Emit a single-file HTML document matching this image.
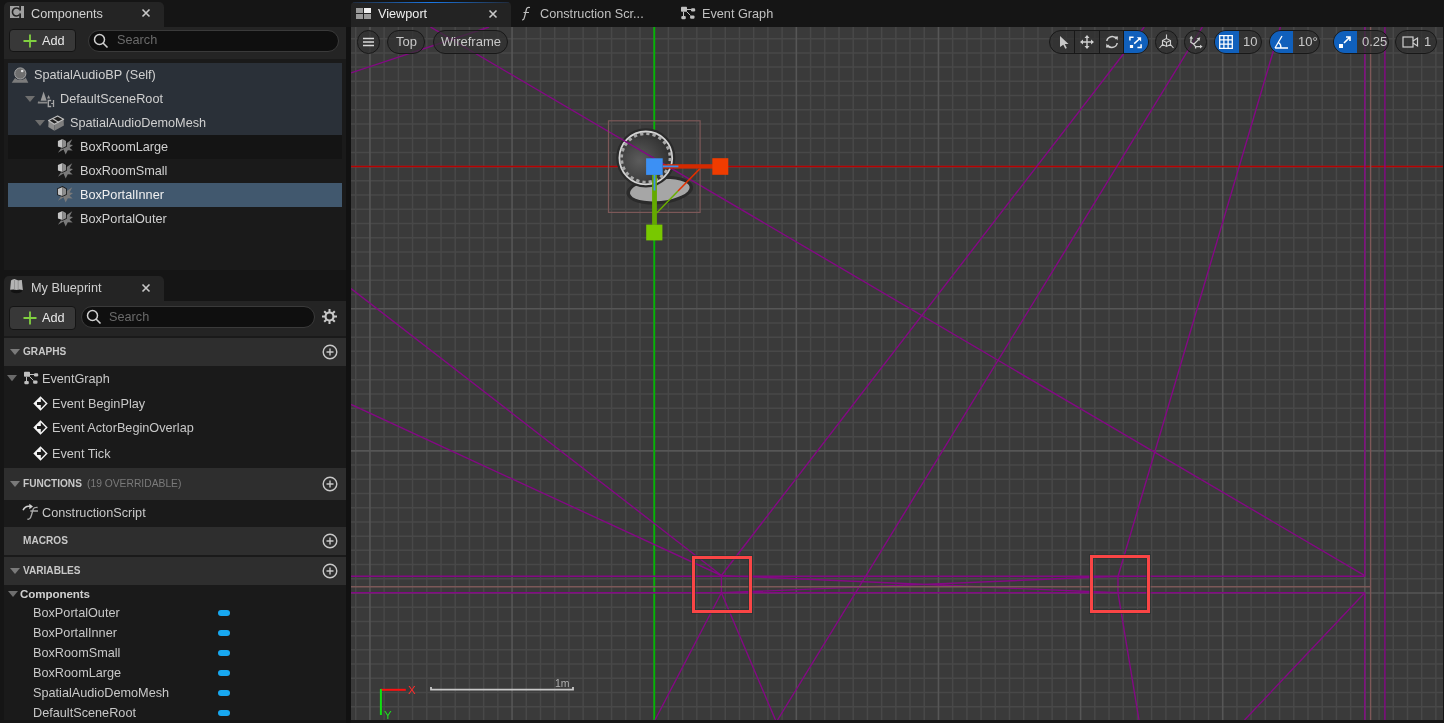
<!DOCTYPE html><html><head><meta charset="utf-8"><style>
*{margin:0;padding:0;box-sizing:border-box}
html,body{width:1444px;height:723px;overflow:hidden;background:#151515;font-family:"Liberation Sans",sans-serif;color:#c0c0c0}
.a{position:absolute}
.t{position:absolute;white-space:nowrap;font-size:12.7px;line-height:16px;will-change:transform}
svg{position:absolute;overflow:visible}
</style></head><body>
<div class="a" style="left:4px;top:2px;width:160px;height:25px;background:#242424;border-radius:5px 5px 0 0"></div>
<div class="a" style="left:4px;top:27px;width:342px;height:32px;background:#242424;"></div>
<div class="a" style="left:4px;top:59px;width:342px;height:211px;background:#1a1a1a;"></div>
<svg style="left:0;top:0" width="30" height="26" viewBox="0 0 30 26"><rect x="10" y="6" width="9.2" height="12" fill="#a0a0a0"/><rect x="21" y="6" width="3" height="12" fill="#a0a0a0"/><path d="M19.3 9.2A4 4 0 1 0 19.3 14.8" stroke="#222" stroke-width="1.6" fill="none"/><rect x="19.1" y="10.6" width="2" height="2.8" fill="#a0a0a0"/></svg>
<div class="t" style="left:31px;top:5.5px;color:#d0d0d0;font-size:12.7px;font-weight:normal;">Components</div>
<svg style="left:141px;top:8px" width="10" height="10" viewBox="0 0 10 10"><path d="M1.5 1.5L8.5 8.5M8.5 1.5L1.5 8.5" stroke="#c8c8c8" stroke-width="1.6"/></svg>
<div class="a" style="left:9px;top:29px;width:67px;height:23px;background:#383838;border-radius:4px;border:1px solid #141414"></div>
<svg style="left:23px;top:33.5px" width="14" height="14" viewBox="0 0 14 14"><path d="M7 0.5V13.5M0.5 7H13.5" stroke="#80d040" stroke-width="1.8"/></svg>
<div class="t" style="left:42px;top:32.5px;color:#e8e8e8;font-size:12.7px;font-weight:normal;">Add</div>
<div class="a" style="left:88px;top:29.8px;width:251px;height:22px;background:#0f0f0f;border-radius:11px;border:1px solid #3a3a3a"></div>
<svg style="left:93px;top:33px" width="16" height="16" viewBox="0 0 16 16"><circle cx="6.5" cy="6.5" r="5" stroke="#d0d0d0" stroke-width="1.5" fill="none"/><path d="M10 10L14.5 14.5" stroke="#d0d0d0" stroke-width="1.6"/></svg>
<div class="t" style="left:116.5px;top:31.6px;color:#6a6a6a;font-size:12.7px;font-weight:normal;">Search</div>
<div class="a" style="left:8px;top:63px;width:334px;height:24px;background:#2a3038;"></div>
<div class="t" style="left:34px;top:67px;color:#d0d0d0;font-size:12.7px;font-weight:normal;">SpatialAudioBP (Self)</div>
<div class="a" style="left:8px;top:87px;width:334px;height:24px;background:#2a3038;"></div>
<div class="t" style="left:60px;top:91px;color:#d0d0d0;font-size:12.7px;font-weight:normal;">DefaultSceneRoot</div>
<div class="a" style="left:8px;top:111px;width:334px;height:24px;background:#2a3038;"></div>
<div class="t" style="left:70px;top:115px;color:#d0d0d0;font-size:12.7px;font-weight:normal;">SpatialAudioDemoMesh</div>
<div class="a" style="left:8px;top:135px;width:334px;height:24px;background:#141414;"></div>
<div class="t" style="left:80px;top:139px;color:#d0d0d0;font-size:12.7px;font-weight:normal;">BoxRoomLarge</div>
<div class="t" style="left:80px;top:163px;color:#d0d0d0;font-size:12.7px;font-weight:normal;">BoxRoomSmall</div>
<div class="a" style="left:8px;top:183px;width:334px;height:24px;background:#41586e;"></div>
<div class="t" style="left:80px;top:187px;color:#f0f0f0;font-size:12.7px;font-weight:normal;">BoxPortalInner</div>
<div class="t" style="left:80px;top:211px;color:#d0d0d0;font-size:12.7px;font-weight:normal;">BoxPortalOuter</div>
<svg style="left:11px;top:64px" width="18" height="20" viewBox="0 0 18 20"><path d="M4.4 13.6L0.7 18.8H17.3L14.7 13.6Z" fill="#7c7c7c"/><circle cx="9.3" cy="9.5" r="6.6" fill="#2a3038"/><circle cx="9.3" cy="9.5" r="5.6" fill="#6e6e6e" stroke="#a8a8a8" stroke-width="1"/><circle cx="11.2" cy="7" r="1.3" fill="#e0e0e0"/></svg>
<svg style="left:25px;top:96px" width="10" height="6" viewBox="0 0 10 6"><path d="M0 0H10L5.0 6Z" fill="#6e6e6e"/></svg>
<svg style="left:34px;top:88px" width="24" height="46" viewBox="0 0 24 46"><path d="M9.55 3.5L12.7 12.7H6.6Z" fill="#9a9a9a"/><path d="M14.6 7L16.2 10.4H13Z" fill="#9a9a9a"/><path d="M3.8 15.6V14.2L5.2 12.8V13.7H13.4V15.6Z" fill="#8a8a8a"/><path d="M17.2 12.5H14.3V18.5H17.2M19.5 12V19" stroke="#a8a8a8" stroke-width="1.3" fill="none"/><path d="M17.2 15.5H19" stroke="#a8a8a8" stroke-width="1.2"/></svg>
<svg style="left:35px;top:120px" width="10" height="6" viewBox="0 0 10 6"><path d="M0 0H10L5.0 6Z" fill="#6e6e6e"/></svg>
<svg style="left:34px;top:88px" width="34" height="46" viewBox="0 0 34 46"><path d="M14.6 32.5L20.4 36.3V42.7L14.3 38.9Z" fill="#8c8c8c"/><path d="M20.4 36.3L29.6 31.2L29.9 37.6L20.4 42.7Z" fill="#7e7e7e"/><path d="M14.6 32.5L23.6 28L29.6 31.2L20.4 36.3Z" fill="#222" stroke="#c0c0c0" stroke-width="1.2" stroke-linejoin="round"/><path d="M18.5 30.6L24.8 34.4" stroke="#c0c0c0" stroke-width="1.2"/></svg>
<svg style="left:56px;top:137px" width="19" height="19" viewBox="0 0 19 19"><path d="M1.9 15.7L7.5 12.5L9.7 17.6L11.8 13.2L16.7 13.6L13.6 10.8L17 8.1L13.6 7.6L16.2 2.3L10 6.5L6 10Z" fill="#7a7a7a"/><path d="M6.5 1.9L10 4V9.3L6.5 11L1.9 9.5V4Z" fill="#1a1a1a" stroke="#151515" stroke-width="1.6"/><path d="M6.5 1.9L1.9 4V9.5L6.5 11Z" fill="#c4c4c4"/><path d="M6.5 1.9L10 4V9.3L6.5 11Z" fill="#8e8e8e"/></svg>
<svg style="left:56px;top:161px" width="19" height="19" viewBox="0 0 19 19"><path d="M1.9 15.7L7.5 12.5L9.7 17.6L11.8 13.2L16.7 13.6L13.6 10.8L17 8.1L13.6 7.6L16.2 2.3L10 6.5L6 10Z" fill="#7a7a7a"/><path d="M6.5 1.9L10 4V9.3L6.5 11L1.9 9.5V4Z" fill="#1a1a1a" stroke="#151515" stroke-width="1.6"/><path d="M6.5 1.9L1.9 4V9.5L6.5 11Z" fill="#c4c4c4"/><path d="M6.5 1.9L10 4V9.3L6.5 11Z" fill="#8e8e8e"/></svg>
<svg style="left:56px;top:185px" width="19" height="19" viewBox="0 0 19 19"><path d="M1.9 15.7L7.5 12.5L9.7 17.6L11.8 13.2L16.7 13.6L13.6 10.8L17 8.1L13.6 7.6L16.2 2.3L10 6.5L6 10Z" fill="#7a7a7a"/><path d="M6.5 1.9L10 4V9.3L6.5 11L1.9 9.5V4Z" fill="#1a1a1a" stroke="#151515" stroke-width="1.6"/><path d="M6.5 1.9L1.9 4V9.5L6.5 11Z" fill="#c4c4c4"/><path d="M6.5 1.9L10 4V9.3L6.5 11Z" fill="#8e8e8e"/></svg>
<svg style="left:56px;top:209px" width="19" height="19" viewBox="0 0 19 19"><path d="M1.9 15.7L7.5 12.5L9.7 17.6L11.8 13.2L16.7 13.6L13.6 10.8L17 8.1L13.6 7.6L16.2 2.3L10 6.5L6 10Z" fill="#7a7a7a"/><path d="M6.5 1.9L10 4V9.3L6.5 11L1.9 9.5V4Z" fill="#1a1a1a" stroke="#151515" stroke-width="1.6"/><path d="M6.5 1.9L1.9 4V9.5L6.5 11Z" fill="#c4c4c4"/><path d="M6.5 1.9L10 4V9.3L6.5 11Z" fill="#8e8e8e"/></svg>
<div class="a" style="left:4px;top:276px;width:160px;height:25px;background:#242424;border-radius:5px 5px 0 0"></div>
<div class="a" style="left:4px;top:301px;width:342px;height:35px;background:#242424;"></div>
<div class="a" style="left:4px;top:336px;width:342px;height:384px;background:#1a1a1a;"></div>
<svg style="left:8px;top:276px" width="18" height="20" viewBox="0 0 18 20"><ellipse cx="8.5" cy="15" rx="5.5" ry="2.2" fill="#121212"/><path d="M3 4.6Q4.5 2.9 6.5 2.9Q8.5 3.5 10.2 4.6Q12 3.8 13.8 4L14.9 14Q11 13.2 8.5 14Q6 13 2.1 13.8Z" fill="#b4b4b4"/><path d="M6.5 4V13M10.2 5V13.5" stroke="#8a8a8a" stroke-width="0.8"/></svg>
<div class="t" style="left:31px;top:279.5px;color:#d0d0d0;font-size:12.7px;font-weight:normal;">My Blueprint</div>
<svg style="left:141px;top:282.5px" width="10" height="10" viewBox="0 0 10 10"><path d="M1.5 1.5L8.5 8.5M8.5 1.5L1.5 8.5" stroke="#c8c8c8" stroke-width="1.6"/></svg>
<div class="a" style="left:9px;top:306px;width:67px;height:24px;background:#383838;border-radius:4px;border:1px solid #141414"></div>
<svg style="left:23px;top:310.5px" width="14" height="14" viewBox="0 0 14 14"><path d="M7 0.5V13.5M0.5 7H13.5" stroke="#80d040" stroke-width="1.8"/></svg>
<div class="t" style="left:42px;top:309.5px;color:#e8e8e8;font-size:12.7px;font-weight:normal;">Add</div>
<div class="a" style="left:81px;top:306px;width:234px;height:22px;background:#0f0f0f;border-radius:11px;border:1px solid #3a3a3a"></div>
<svg style="left:86px;top:309px" width="16" height="16" viewBox="0 0 16 16"><circle cx="6.5" cy="6.5" r="5" stroke="#d0d0d0" stroke-width="1.5" fill="none"/><path d="M10 10L14.5 14.5" stroke="#d0d0d0" stroke-width="1.6"/></svg>
<div class="t" style="left:108.5px;top:308.5px;color:#6a6a6a;font-size:12.7px;font-weight:normal;">Search</div>
<svg style="left:321px;top:308px" width="17" height="17" viewBox="0 0 17 17"><circle cx="8.5" cy="8.5" r="4" fill="none" stroke="#c8c8c8" stroke-width="2.2"/><path d="M8.5 1V4M8.5 13V16M1 8.5H4M13 8.5H16M3.2 3.2L5.3 5.3M11.7 11.7L13.8 13.8M3.2 13.8L5.3 11.7M11.7 5.3L13.8 3.2" stroke="#c8c8c8" stroke-width="2"/></svg>
<div class="a" style="left:4px;top:338px;width:342px;height:28px;background:#2e2e2e;"></div>
<svg style="left:10px;top:349.0px" width="10" height="6" viewBox="0 0 10 6"><path d="M0 0H10L5.0 6Z" fill="#7a7a7a"/></svg>
<div class="t" style="left:23px;top:344.0px;color:#c8c8c8;font-size:10.1px;font-weight:bold;">GRAPHS</div>
<svg style="left:322px;top:344.0px" width="16" height="16" viewBox="0 0 16 16"><circle cx="8" cy="8" r="6.8" stroke="#c8c8c8" stroke-width="1.4" fill="none"/><path d="M8 4.5V11.5M4.5 8H11.5" stroke="#c8c8c8" stroke-width="1.4"/></svg>
<div class="a" style="left:4px;top:468px;width:342px;height:32px;background:#2e2e2e;"></div>
<svg style="left:10px;top:481.0px" width="10" height="6" viewBox="0 0 10 6"><path d="M0 0H10L5.0 6Z" fill="#7a7a7a"/></svg>
<div class="t" style="left:23px;top:476.0px;color:#c8c8c8;font-size:10.1px;font-weight:bold;">FUNCTIONS</div>
<svg style="left:322px;top:476.0px" width="16" height="16" viewBox="0 0 16 16"><circle cx="8" cy="8" r="6.8" stroke="#c8c8c8" stroke-width="1.4" fill="none"/><path d="M8 4.5V11.5M4.5 8H11.5" stroke="#c8c8c8" stroke-width="1.4"/></svg>
<div class="a" style="left:4px;top:527px;width:342px;height:28px;background:#2e2e2e;"></div>
<div class="t" style="left:23px;top:533.0px;color:#c8c8c8;font-size:10.1px;font-weight:bold;">MACROS</div>
<svg style="left:322px;top:533.0px" width="16" height="16" viewBox="0 0 16 16"><circle cx="8" cy="8" r="6.8" stroke="#c8c8c8" stroke-width="1.4" fill="none"/><path d="M8 4.5V11.5M4.5 8H11.5" stroke="#c8c8c8" stroke-width="1.4"/></svg>
<div class="a" style="left:4px;top:557px;width:342px;height:28px;background:#2e2e2e;"></div>
<svg style="left:10px;top:568.0px" width="10" height="6" viewBox="0 0 10 6"><path d="M0 0H10L5.0 6Z" fill="#7a7a7a"/></svg>
<div class="t" style="left:23px;top:563.0px;color:#c8c8c8;font-size:10.1px;font-weight:bold;">VARIABLES</div>
<svg style="left:322px;top:563.0px" width="16" height="16" viewBox="0 0 16 16"><circle cx="8" cy="8" r="6.8" stroke="#c8c8c8" stroke-width="1.4" fill="none"/><path d="M8 4.5V11.5M4.5 8H11.5" stroke="#c8c8c8" stroke-width="1.4"/></svg>
<div class="t" style="left:87px;top:475.5px;color:#7a7a7a;font-size:10.3px;font-weight:normal;">(19 OVERRIDABLE)</div>
<svg style="left:7px;top:374.8px" width="10" height="6.2" viewBox="0 0 10 6.2"><path d="M0 0H10L5.0 6.2Z" fill="#6a6a6a"/></svg>
<svg style="left:22px;top:369px" width="18" height="18" viewBox="0 0 18 18"><path d="M8 5.5H12M4.5 7.8V12M7.5 7.5L11.5 11.5" stroke="#c0c0c0" stroke-width="1" fill="none"/><rect x="2" y="2.8" width="6" height="5" rx="0.8" fill="#c0c0c0"/><rect x="12" y="4.2" width="4.2" height="3.2" rx="1.2" fill="#c0c0c0"/><rect x="2.3" y="11.9" width="4.5" height="3.4" rx="1.2" fill="#c0c0c0"/><rect x="11.1" y="11.4" width="4.4" height="3.4" rx="1.2" fill="#c0c0c0"/></svg>
<div class="t" style="left:42px;top:370.7px;color:#c8c8c8;font-size:12.7px;font-weight:normal;">EventGraph</div>
<svg style="left:33.4px;top:395.5px" width="15" height="15" viewBox="0 0 15 15"><path d="M7.5 0.3L14.7 7.5L7.5 14.7L0.3 7.5Z" fill="#f4f4f4"/><path d="M4 5.9H7.8V2.6L12.7 7.5L7.8 12.4V9.1H4Z" fill="#1a1a1a"/></svg>
<div class="t" style="left:52px;top:395.8px;color:#c8c8c8;font-size:12.7px;font-weight:normal;">Event BeginPlay</div>
<svg style="left:33.4px;top:420.09999999999997px" width="15" height="15" viewBox="0 0 15 15"><path d="M7.5 0.3L14.7 7.5L7.5 14.7L0.3 7.5Z" fill="#f4f4f4"/><path d="M4 5.9H7.8V2.6L12.7 7.5L7.8 12.4V9.1H4Z" fill="#1a1a1a"/></svg>
<div class="t" style="left:52px;top:420.4px;color:#c8c8c8;font-size:12.7px;font-weight:normal;">Event ActorBeginOverlap</div>
<svg style="left:33.4px;top:445.9px" width="15" height="15" viewBox="0 0 15 15"><path d="M7.5 0.3L14.7 7.5L7.5 14.7L0.3 7.5Z" fill="#f4f4f4"/><path d="M4 5.9H7.8V2.6L12.7 7.5L7.8 12.4V9.1H4Z" fill="#1a1a1a"/></svg>
<div class="t" style="left:52px;top:446.2px;color:#c8c8c8;font-size:12.7px;font-weight:normal;">Event Tick</div>
<svg style="left:18px;top:500px" width="26" height="24" viewBox="0 0 26 24"><path d="M5.1 10.3Q7 5.5 12 6.3" stroke="#d0d0d0" stroke-width="1.6" fill="none"/><path d="M11.3 3.8L15 6.5L11.3 9.2Z" fill="#d0d0d0"/><path d="M9.3 19Q12 20.2 13.5 15L15.2 9Q16 7.2 19.6 7.5M12.3 11H20" stroke="#a8a8a8" stroke-width="1.3" fill="none"/></svg>
<div class="t" style="left:42px;top:505.20000000000005px;color:#c8c8c8;font-size:12.7px;font-weight:normal;">ConstructionScript</div>
<svg style="left:8px;top:591px" width="10" height="6" viewBox="0 0 10 6"><path d="M0 0H10L5.0 6Z" fill="#6e6e6e"/></svg>
<div class="t" style="left:20px;top:585.6px;color:#d0d0d0;font-size:11.6px;font-weight:bold;letter-spacing:-0.1px">Components</div>
<div class="t" style="left:33px;top:604.7px;color:#c8c8c8;font-size:12.7px;font-weight:normal;">BoxPortalOuter</div>
<div class="a" style="left:218px;top:610px;width:12px;height:6px;background:#18a8f0;border-radius:3px"></div>
<div class="t" style="left:33px;top:624.7px;color:#c8c8c8;font-size:12.7px;font-weight:normal;">BoxPortalInner</div>
<div class="a" style="left:218px;top:630px;width:12px;height:6px;background:#18a8f0;border-radius:3px"></div>
<div class="t" style="left:33px;top:644.7px;color:#c8c8c8;font-size:12.7px;font-weight:normal;">BoxRoomSmall</div>
<div class="a" style="left:218px;top:650px;width:12px;height:6px;background:#18a8f0;border-radius:3px"></div>
<div class="t" style="left:33px;top:664.7px;color:#c8c8c8;font-size:12.7px;font-weight:normal;">BoxRoomLarge</div>
<div class="a" style="left:218px;top:670px;width:12px;height:6px;background:#18a8f0;border-radius:3px"></div>
<div class="t" style="left:33px;top:684.7px;color:#c8c8c8;font-size:12.7px;font-weight:normal;">SpatialAudioDemoMesh</div>
<div class="a" style="left:218px;top:690px;width:12px;height:6px;background:#18a8f0;border-radius:3px"></div>
<div class="t" style="left:33px;top:704.7px;color:#c8c8c8;font-size:12.7px;font-weight:normal;">DefaultSceneRoot</div>
<div class="a" style="left:218px;top:710px;width:12px;height:6px;background:#18a8f0;border-radius:3px"></div>
<div class="a" style="left:346px;top:27px;width:5px;height:696px;background:#111111;"></div>
<div class="a" style="left:351px;top:2px;width:160px;height:25px;background:#232323;border-radius:4px 4px 0 0"></div>
<div class="a" style="left:353px;top:1.8px;width:156px;height:1.4px;background:linear-gradient(90deg,rgba(20,90,200,0.15),#1a78e6 50%,rgba(20,90,200,0.15));"></div>
<svg style="left:356px;top:8px" width="16" height="12" viewBox="0 0 16 12"><rect x="0" y="0" width="7" height="5" fill="#9a9a9a"/><rect x="8" y="0" width="7" height="5" fill="#f0f0f0"/><rect x="0" y="6" width="7" height="5" fill="#9a9a9a"/><rect x="8" y="6" width="7" height="5" fill="#9a9a9a"/></svg>
<div class="t" style="left:378px;top:5.699999999999999px;color:#f0f0f0;font-size:12.7px;font-weight:normal;">Viewport</div>
<svg style="left:488px;top:8.5px" width="10" height="10" viewBox="0 0 10 10"><path d="M1.5 1.5L8.5 8.5M8.5 1.5L1.5 8.5" stroke="#c8c8c8" stroke-width="1.6"/></svg>
<svg style="left:520px;top:6px" width="12" height="15" viewBox="0 0 12 15"><path d="M2 14Q4 14 4.5 11L6.5 3Q7 1 10 1.5M3.5 6.5H9" stroke="#c0c0c0" stroke-width="1.2" fill="none"/></svg>
<div class="t" style="left:540px;top:5.699999999999999px;color:#c0c0c0;font-size:12.7px;font-weight:normal;">Construction Scr...</div>
<svg style="left:679px;top:3.7px" width="18" height="18" viewBox="0 0 18 18"><path d="M8 5.5H12M4.5 7.8V12M7.5 7.5L11.5 11.5" stroke="#c0c0c0" stroke-width="1" fill="none"/><rect x="2" y="2.8" width="6" height="5" rx="0.8" fill="#c0c0c0"/><rect x="12" y="4.2" width="4.2" height="3.2" rx="1.2" fill="#c0c0c0"/><rect x="2.3" y="11.9" width="4.5" height="3.4" rx="1.2" fill="#c0c0c0"/><rect x="11.1" y="11.4" width="4.4" height="3.4" rx="1.2" fill="#c0c0c0"/></svg>
<div class="t" style="left:702px;top:5.699999999999999px;color:#c0c0c0;font-size:12.7px;font-weight:normal;">Event Graph</div>
<div class="a" style="left:351px;top:27px;width:1093px;height:693px;background:#3a3a3a;overflow:hidden">
<svg style="left:0;top:0" width="1093" height="693">
<path d="M4.73 0V693M33.15 0V693M47.37 0V693M61.58 0V693M75.79 0V693M90.01 0V693M104.22 0V693M118.43 0V693M132.64 0V693M146.86 0V693M175.28 0V693M189.5 0V693M203.71 0V693M217.92 0V693M232.13 0V693M246.35 0V693M260.56 0V693M274.77 0V693M288.99 0V693M317.41 0V693M331.63 0V693M345.84 0V693M360.05 0V693M374.27 0V693M388.48 0V693M402.69 0V693M416.9 0V693M431.12 0V693M459.54 0V693M473.76 0V693M487.97 0V693M502.18 0V693M516.39 0V693M530.61 0V693M544.82 0V693M559.03 0V693M573.25 0V693M601.67 0V693M615.89 0V693M630.1 0V693M644.31 0V693M658.53 0V693M672.74 0V693M686.95 0V693M701.16 0V693M715.38 0V693M743.8 0V693M758.02 0V693M772.23 0V693M786.44 0V693M800.65 0V693M814.87 0V693M829.08 0V693M843.29 0V693M857.51 0V693M885.93 0V693M900.15 0V693M914.36 0V693M928.57 0V693M942.78 0V693M957.0 0V693M971.21 0V693M985.42 0V693M999.64 0V693M1028.06 0V693M1042.28 0V693M1056.49 0V693M1070.7 0V693M1084.91 0V693M0 11.68H1093M0 25.9H1093M0 40.11H1093M0 54.32H1093M0 68.53H1093M0 82.75H1093M0 96.96H1093M0 111.17H1093M0 125.39H1093M0 153.81H1093M0 168.03H1093M0 182.24H1093M0 196.45H1093M0 210.66H1093M0 224.88H1093M0 239.09H1093M0 253.3H1093M0 267.52H1093M0 295.94H1093M0 310.16H1093M0 324.37H1093M0 338.58H1093M0 352.79H1093M0 367.01H1093M0 381.22H1093M0 395.43H1093M0 409.65H1093M0 438.07H1093M0 452.29H1093M0 466.5H1093M0 480.71H1093M0 494.92H1093M0 509.14H1093M0 523.35H1093M0 537.56H1093M0 551.78H1093M0 580.2H1093M0 594.42H1093M0 608.63H1093M0 622.84H1093M0 637.05H1093M0 651.27H1093M0 665.48H1093M0 679.69H1093" stroke="#484848" stroke-width="1.5" fill="none"/>
<path d="M18.94 0V693M161.07 0V693M303.2 0V693M445.33 0V693M587.46 0V693M729.59 0V693M871.72 0V693M1013.85 0V693M0 139.6H1093M0 281.73H1093M0 423.86H1093M0 565.99H1093" stroke="#565656" stroke-width="1.6" fill="none"/>
<path d="M303.3 0.0L303.3 693.0" stroke="#00b800" stroke-width="1.8" fill="none"/><path d="M0.0 139.5L1093.0 139.5" stroke="#b80000" stroke-width="1.7" fill="none"/>
<defs><radialGradient id="sg" cx="0.38" cy="0.55" r="0.65"><stop offset="0" stop-color="#5c5c5c"/><stop offset="1" stop-color="#2c2c2c"/></radialGradient></defs><ellipse cx="308.79999999999995" cy="163.2" rx="33.5" ry="14" fill="#2a2a2a" transform="rotate(-6 308.79999999999995 163.2)"/><ellipse cx="308.79999999999995" cy="163.2" rx="30" ry="10.8" fill="#a6a6a6" transform="rotate(-6 308.79999999999995 163.2)"/><circle cx="294.79999999999995" cy="130.9" r="29.6" fill="#2a2a2a"/><circle cx="294.79999999999995" cy="130.9" r="26.4" fill="url(#sg)" stroke="#d4d4d4" stroke-width="1.8"/><circle cx="294.79999999999995" cy="130.9" r="24.3" fill="none" stroke="#a8a8a8" stroke-width="3" stroke-dasharray="3.3 3.05"/>
<path d="M0.0 45.9L138.0 0.0M79.4 0.0L1013.8 548.6M0.0 261.5L370.4 548.5M0.0 377.5L370.4 548.5M793.2 0.0L370.4 548.5M851.4 0.0L426.5 693.0M929.4 0.0L767.0 549.5M0.0 549.3L1013.8 549.3M0.0 565.8L1013.8 565.8M370.4 548.5L767.0 565.8M370.4 565.8L767.0 549.3M370.4 548.5L370.4 565.8M767.0 549.3L767.0 565.8M370.4 565.8L304.0 693.0M370.4 565.8L424.5 693.0M767.0 565.8L788.0 693.0M1013.8 565.8L893.5 693.0M1013.8 0.0L1013.8 549.3M1013.8 565.8L1013.8 693.0M1033.9 0.0L1033.9 693.0" stroke="#840884" stroke-width="1.4" fill="none"/>
<path d="M0.0 559.8L1019.6 559.8M1019.6 0.0L1019.6 693.0" stroke="#7c5858" stroke-width="1.4" fill="none"/>
<rect x="257.5" y="93.8" width="91.6" height="91.6" fill="none" stroke="#7c5858" stroke-width="1.2"/><path d="M305.60 186.00L327.00 164.00" stroke="#6aae00" stroke-width="1.5"/><path d="M327.00 164.00L348.70 141.90" stroke="#e03000" stroke-width="1.5"/><rect x="311.79999999999995" y="137.2" width="50" height="4.4" fill="#d42a00"/><rect x="311.79999999999995" y="138.5" width="15.6" height="1.8" fill="#3a8ef0"/><rect x="361.29999999999995" y="131.2" width="16" height="16.6" fill="#f03c00"/><rect x="301.1" y="147.7" width="4.8" height="50" fill="#64aa00"/><rect x="302.6" y="147.7" width="1.8" height="15.8" fill="#3a8ef0"/><rect x="295.20000000000005" y="197.6" width="16.2" height="15.8" fill="#78c800"/><rect x="295.1" y="131.3" width="16.6" height="16.6" fill="#3c90f4"/>
<rect x="342.5" y="530.5" width="57" height="54" fill="none" stroke="#263030" stroke-opacity="0.55" stroke-width="5"/><rect x="342.5" y="530.5" width="57" height="54" fill="none" stroke="#fa4545" stroke-width="3"/><rect x="740.5" y="529.5" width="57" height="55" fill="none" stroke="#263030" stroke-opacity="0.55" stroke-width="5"/><rect x="740.5" y="529.5" width="57" height="55" fill="none" stroke="#fa4545" stroke-width="3"/><path d="M29.50 662.80H54.80000000000001" stroke="#ff1010" stroke-width="2"/><path d="M29.90 662.00V688" stroke="#10e010" stroke-width="2"/><path d="M80.00 660.00V662.6H222V660" stroke="#c8c8c8" stroke-width="1.8" fill="none"/>
</svg>
<div class="a" style="left:6px;top:3px;width:23px;height:24px;border-radius:12px;background:rgba(48,48,48,0.72);border:1px solid #181818"></div><svg style="left:11px;top:10px" width="13" height="10" viewBox="0 0 13 10"><path d="M1 1.5H12M1 5H12M1 8.5H12" stroke="#d8d8d8" stroke-width="1.3"/></svg><div class="a" style="left:36px;top:3px;width:38px;height:24px;border-radius:12px;background:rgba(48,48,48,0.72);border:1px solid #181818"></div><div class="t" style="left:45px;top:6.5px;color:#c8c8c8;font-size:13px;font-weight:normal;">Top</div><div class="a" style="left:82px;top:3px;width:75px;height:24px;border-radius:12px;background:rgba(48,48,48,0.72);border:1px solid #181818"></div><div class="t" style="left:90px;top:6.5px;color:#c8c8c8;font-size:13px;font-weight:normal;">Wireframe</div><div class="a" style="left:698px;top:3px;width:99.5px;height:24px;border-radius:12px;background:rgba(48,48,48,0.72);border:1px solid #181818;overflow:hidden"><div class="a" style="left:74.2px;top:-1px;width:25.5px;height:24px;background:rgba(13,100,200,0.92)"></div><div class="a" style="left:24.4px;top:-1px;width:1px;height:24px;background:#181818"></div><div class="a" style="left:49.4px;top:-1px;width:1px;height:24px;background:#181818"></div><div class="a" style="left:73.4px;top:-1px;width:1px;height:24px;background:#181818"></div></div><svg style="left:707px;top:8px" width="12" height="14" viewBox="0 0 12 14"><path d="M2 1L10.5 9H6.8L8.8 13L7.3 13.7L5.3 9.7L2 12Z" fill="#c8c8c8"/></svg><svg style="left:729px;top:8px" width="14" height="14" viewBox="0 0 14 14"><path d="M7 1V13M1 7H13" stroke="#d0d0d0" stroke-width="1.4"/><path d="M7 0L9.5 3H4.5ZM7 14L9.5 11H4.5ZM0 7L3 4.5V9.5ZM14 7L11 4.5V9.5Z" fill="#d0d0d0"/></svg><svg style="left:754px;top:8px" width="14" height="14" viewBox="0 0 14 14"><path d="M1.8 6A5.3 5.3 0 0 1 11.5 4M12.2 8A5.3 5.3 0 0 1 2.5 10" stroke="#d0d0d0" stroke-width="1.5" fill="none"/><path d="M10 1.5L13 1.5L12.5 5.5ZM4 12.5L1 12.5L1.5 8.5Z" fill="#d0d0d0"/></svg><svg style="left:777px;top:8px" width="15" height="15" viewBox="0 0 15 15"><path d="M1.9 5.6V2.3H5.6M13.1 9.2V12.6H9.4M6.2 8.6L11.6 3.8" stroke="#fff" stroke-width="1.5" fill="none"/><rect x="1.9" y="10" width="3.2" height="3" fill="#fff"/><path d="M8.8 2.3H13.1V6.6Z" fill="#fff"/></svg><div class="a" style="left:804px;top:3px;width:23px;height:24px;border-radius:12px;background:rgba(48,48,48,0.72);border:1px solid #181818"></div><svg style="left:808px;top:7px" width="15" height="16" viewBox="0 0 15 16"><path d="M7.5 0.5V4.5M7.5 4.5L3.5 6.5V10.5L7.5 12.5L11.5 10.5V6.5ZM7.5 8.5V12.5M3.5 6.5L7.5 8.5L11.5 6.5M3.5 10.5L0.5 14M11.5 10.5L14.5 14" stroke="#d0d0d0" stroke-width="1.1" fill="none"/></svg><div class="a" style="left:833px;top:3px;width:23px;height:24px;border-radius:12px;background:rgba(48,48,48,0.72);border:1px solid #181818"></div><svg style="left:833px;top:3px" width="24" height="24" viewBox="0 0 24 24"><path d="M9.8 14.3L6.8 12.2L7.2 8M9.8 14.3L14.5 9.6M9.8 14.3L11.6 16.6H16.5M11.6 16.6V18.6" stroke="#d0d0d0" stroke-width="1.3" fill="none"/><path d="M5.4 8.6L7.3 5.7L9.1 8.7ZM12.6 8.6L16.3 7.2L15.4 11ZM16 14.8L18.6 16.6L16 18.4Z" fill="#d0d0d0"/></svg><div class="a" style="left:862.5px;top:3px;width:48.0px;height:24px;border-radius:12px;background:rgba(48,48,48,0.72);border:1px solid #181818;overflow:hidden"><div class="a" style="left:-1px;top:-1px;width:25.0px;height:24px;background:rgba(13,100,200,0.92)"></div></div><svg style="left:868px;top:8px" width="14" height="14" viewBox="0 0 14 14"><path d="M0.7 0.7H13.3V13.3H0.7ZM4.9 0.7V13.3M9.1 0.7V13.3M0.7 4.9H13.3M0.7 9.1H13.3" stroke="#fff" stroke-width="1.3" fill="none"/></svg><div class="t" style="left:892px;top:7px;color:#c8c8c8;font-size:13px;font-weight:normal;">10</div><div class="a" style="left:917.5px;top:3px;width:51.5px;height:24px;border-radius:12px;background:rgba(48,48,48,0.72);border:1px solid #181818;overflow:hidden"><div class="a" style="left:-1px;top:-1px;width:24.5px;height:24px;background:rgba(13,100,200,0.92)"></div></div><svg style="left:923px;top:8px" width="15" height="14" viewBox="0 0 15 14"><path d="M1 13H14M1 13L8 1M4.5 7.5Q7 9 7 13" stroke="#fff" stroke-width="1.3" fill="none"/></svg><div class="t" style="left:946.5px;top:7px;color:#c8c8c8;font-size:13px;font-weight:normal;">10°</div><div class="a" style="left:981.5px;top:3px;width:56.0px;height:24px;border-radius:12px;background:rgba(48,48,48,0.72);border:1px solid #181818;overflow:hidden"><div class="a" style="left:-1px;top:-1px;width:24.5px;height:24px;background:rgba(13,100,200,0.92)"></div></div><svg style="left:987px;top:8px" width="14" height="14" viewBox="0 0 14 14"><rect x="1" y="9" width="4" height="4" fill="#fff"/><path d="M6 8L12 2M8 2H12V6" stroke="#fff" stroke-width="1.6" fill="none"/></svg><div class="t" style="left:1010.5px;top:7px;color:#c8c8c8;font-size:13px;font-weight:normal;">0.25</div><div class="a" style="left:1044px;top:3px;width:41.5px;height:24px;border-radius:12px;background:rgba(48,48,48,0.72);border:1px solid #181818"></div><svg style="left:1051px;top:8px" width="17" height="14" viewBox="0 0 17 14"><rect x="1" y="2" width="10" height="10" fill="none" stroke="#d0d0d0" stroke-width="1.2"/><path d="M11 6L15.5 3V11L11 8" fill="none" stroke="#d0d0d0" stroke-width="1.2"/></svg><div class="t" style="left:1073px;top:7px;color:#c8c8c8;font-size:13px;font-weight:normal;">1</div>
<div class="t" style="left:57.30000000000001px;top:655px;color:#ff2a2a;font-size:11.5px;font-weight:normal;">X</div>
<div class="t" style="left:32.80000000000001px;top:680px;color:#22dd22;font-size:11.5px;font-weight:normal;">Y</div>
<div class="t" style="left:204px;top:648px;color:#b0b0b0;font-size:10.5px;font-weight:normal;">1m</div>
</div>
<div class="a" style="left:1443px;top:27px;width:1px;height:696px;background:#151515;"></div>
</body></html>
